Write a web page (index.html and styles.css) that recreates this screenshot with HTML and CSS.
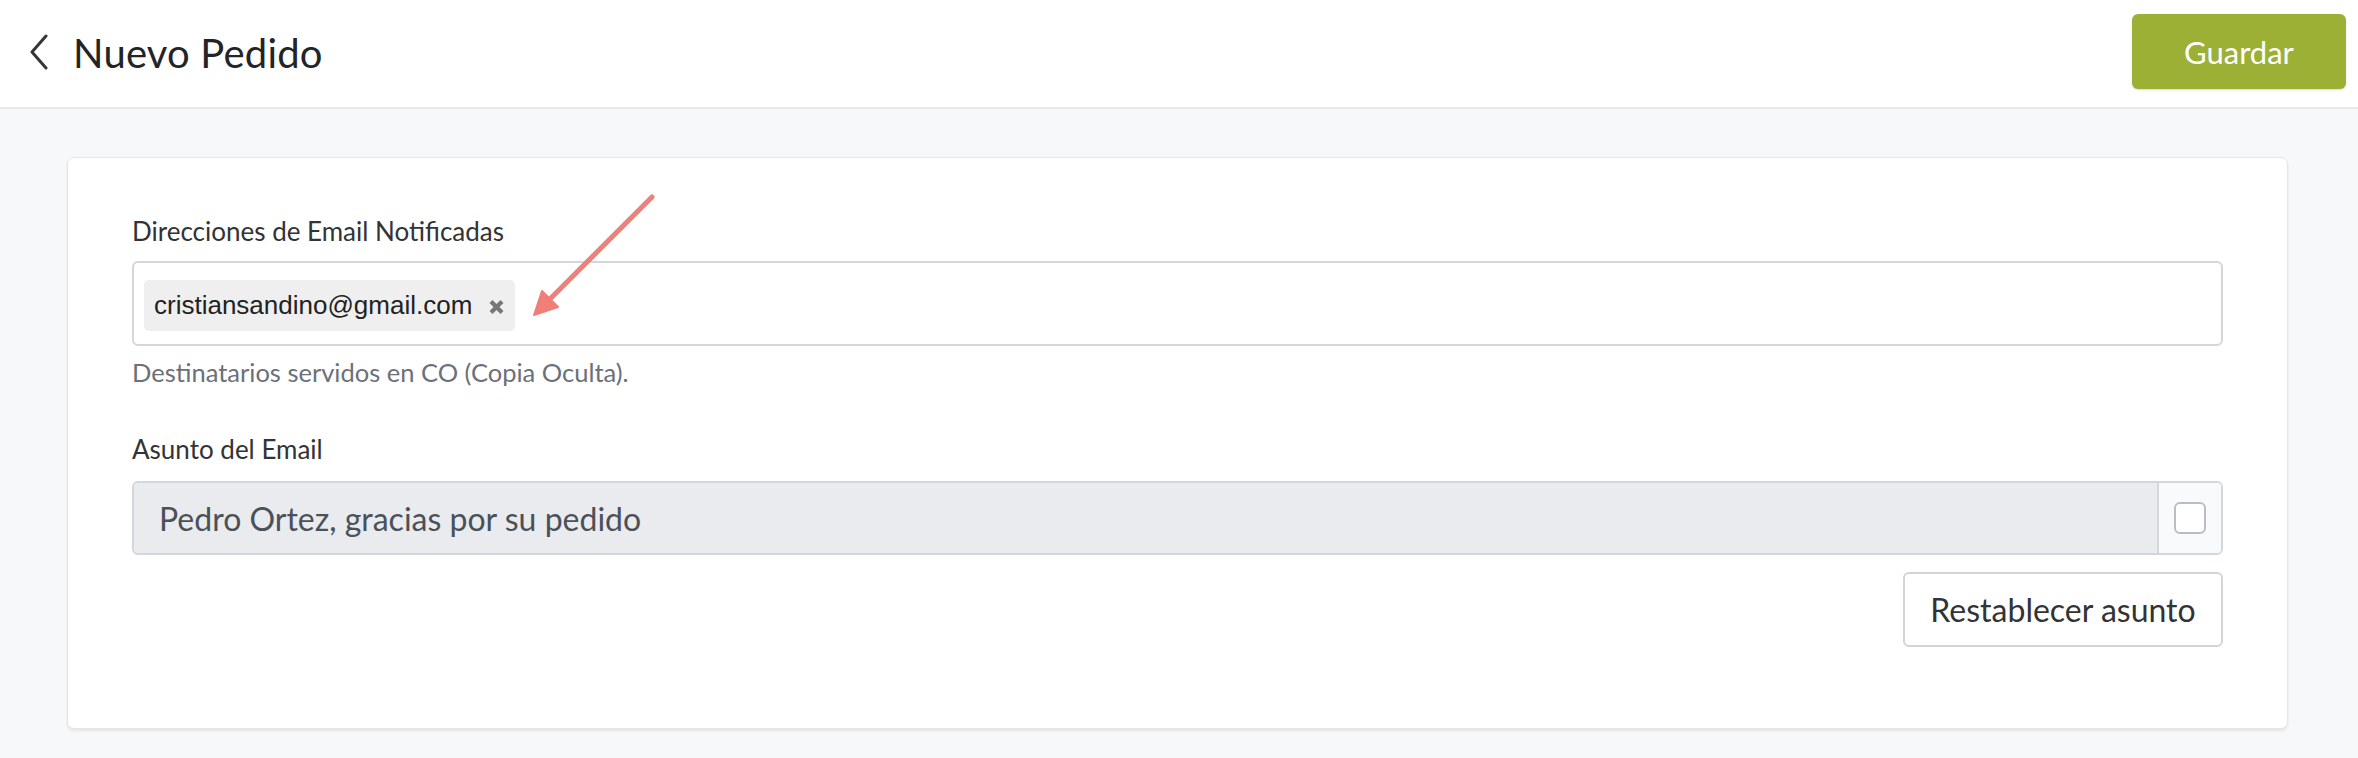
FILE: index.html
```html
<!DOCTYPE html>
<html lang="es">
<head>
<meta charset="utf-8">
<title>Nuevo Pedido</title>
<link rel="stylesheet" href="styles.css">
</head>
<body>
<header class="topbar">
  <div class="title-group">
    <svg class="back" width="20" height="36" viewBox="0 0 20 36"><polyline points="16,2 2,18 16,34" fill="none" stroke="#33373b" stroke-width="3" stroke-linecap="round" stroke-linejoin="round"/></svg>
    <h1 class="title">Nuevo Pedido</h1>
  </div>
  <button class="btn-primary">Guardar</button>
</header>
<main class="main">
  <section class="card">
    <div class="field">
      <label class="label">Direcciones de Email Notificadas</label>
      <div class="tag-input">
        <span class="chip">cristiansandino@gmail.com
          <svg class="chip-x" width="17" height="16" viewBox="0 0 17 16"><path d="M3 2.5 L14 13.5 M14 2.5 L3 13.5" stroke="#777" stroke-width="4.2" stroke-linecap="butt"/></svg>
        </span>
      </div>
      <p class="help">Destinatarios servidos en CO (Copia Oculta).</p>
    </div>
    <div class="field field-subject">
      <label class="label label-subject">Asunto del Email</label>
      <div class="input-group">
        <div class="subject-input">Pedro Ortez, gracias por su pedido</div>
        <div class="addon"><span class="checkbox"></span></div>
      </div>
      <div class="actions">
        <button class="btn-default">Restablecer asunto</button>
      </div>
    </div>
    <svg class="annot-arrow" width="140" height="140" viewBox="0 0 140 140">
      <line x1="126" y1="8" x2="22" y2="112" stroke="#ef7f78" stroke-width="5" stroke-linecap="round"/>
      <polygon points="8,126 16,102 32,118" fill="#ef7f78" stroke="#ef7f78" stroke-width="2" stroke-linejoin="round"/>
    </svg>
  </section>
</main>
</body>
</html>
```
FILE: styles.css
```css
* { box-sizing: border-box; }
html, body { margin: 0; padding: 0; }
body {
  background: #f7f8fa;
  font-family: "Lato", "Liberation Sans", sans-serif;
  color: #333;
  width: 2358px;
  height: 758px;
  overflow: hidden;
}
.topbar {
  height: 109px;
  background: #fff;
  border-bottom: 2px solid #e6e8ec;
  display: flex;
  justify-content: space-between;
  align-items: flex-start;
  padding: 0 12px 0 30px;
}
.title-group {
  display: flex;
  align-items: center;
  height: 106px;
  gap: 23px;
}
.back { display: block; margin-top: -2px; }
.title {
  margin: 0;
  font-size: 40px;
  font-weight: 400;
  color: #222426;
  letter-spacing: 0.2px;
}
.btn-primary {
  margin-top: 14px;
  width: 214px;
  height: 75px;
  background: #9db036;
  color: #fff;
  border: none;
  border-radius: 6px;
  font-family: "Lato", sans-serif;
  font-size: 31px;
  box-shadow: 0 1px 2px rgba(0,0,0,0.15);
}
.main {
  padding: 48px 70px 0 67px;
}
.card {
  position: relative;
  background: #fff;
  border: 1px solid #e4e6e9;
  border-radius: 7px;
  box-shadow: 0 2px 3px rgba(0,0,0,0.08);
  height: 572px;
  padding: 57px 64px 0 64px;
}
.label {
  display: block;
  font-size: 26px;
  line-height: 32px;
  color: #333;
}
.tag-input {
  margin-top: 14px;
  height: 85px;
  border: 2px solid #d3d7dc;
  border-radius: 6px;
  padding: 17px 10px 0 10px;
  display: flex;
  align-items: flex-start;
}
.chip {
  display: inline-flex;
  align-items: center;
  height: 51px;
  background: #efefef;
  border-radius: 5px;
  padding: 0 10px 0 10px;
  gap: 16px;
  font-family: "Liberation Sans", Arial, sans-serif;
  font-size: 26px;
  color: #222;
}
.chip-x { display: block; margin-top: 3px; }
.help {
  margin: 11px 0 0 0;
  font-size: 25.5px;
  line-height: 30px;
  color: #6b7079;
}
.field-subject { margin-top: 46px; }
.label-subject { margin-bottom: 16px; }
.input-group {
  display: flex;
  height: 74px;
  border: 2px solid #d3d7dc;
  border-radius: 6px;
  overflow: hidden;
}
.subject-input {
  flex: 1;
  background: #e9ebef;
  display: flex;
  align-items: center;
  padding-left: 25px;
  font-size: 32px;
  color: #4b5158;
}
.addon {
  width: 64px;
  background: #f9fafb;
  border-left: 2px solid #d3d7dc;
  display: flex;
  align-items: center;
  justify-content: center;
}
.checkbox {
  width: 32px;
  height: 32px;
  border: 2px solid #b9bec6;
  border-radius: 6px;
  background: #fff;
  display: block;
}
.actions {
  display: flex;
  justify-content: flex-end;
  margin-top: 17px;
}
.btn-default {
  width: 320px;
  height: 75px;
  background: #fff;
  border: 2px solid #d1d5da;
  border-radius: 6px;
  font-family: "Lato", sans-serif;
  font-size: 32px;
  color: #333;
}
.annot-arrow {
  position: absolute;
  left: 458px;
  top: 31px;
}
```
